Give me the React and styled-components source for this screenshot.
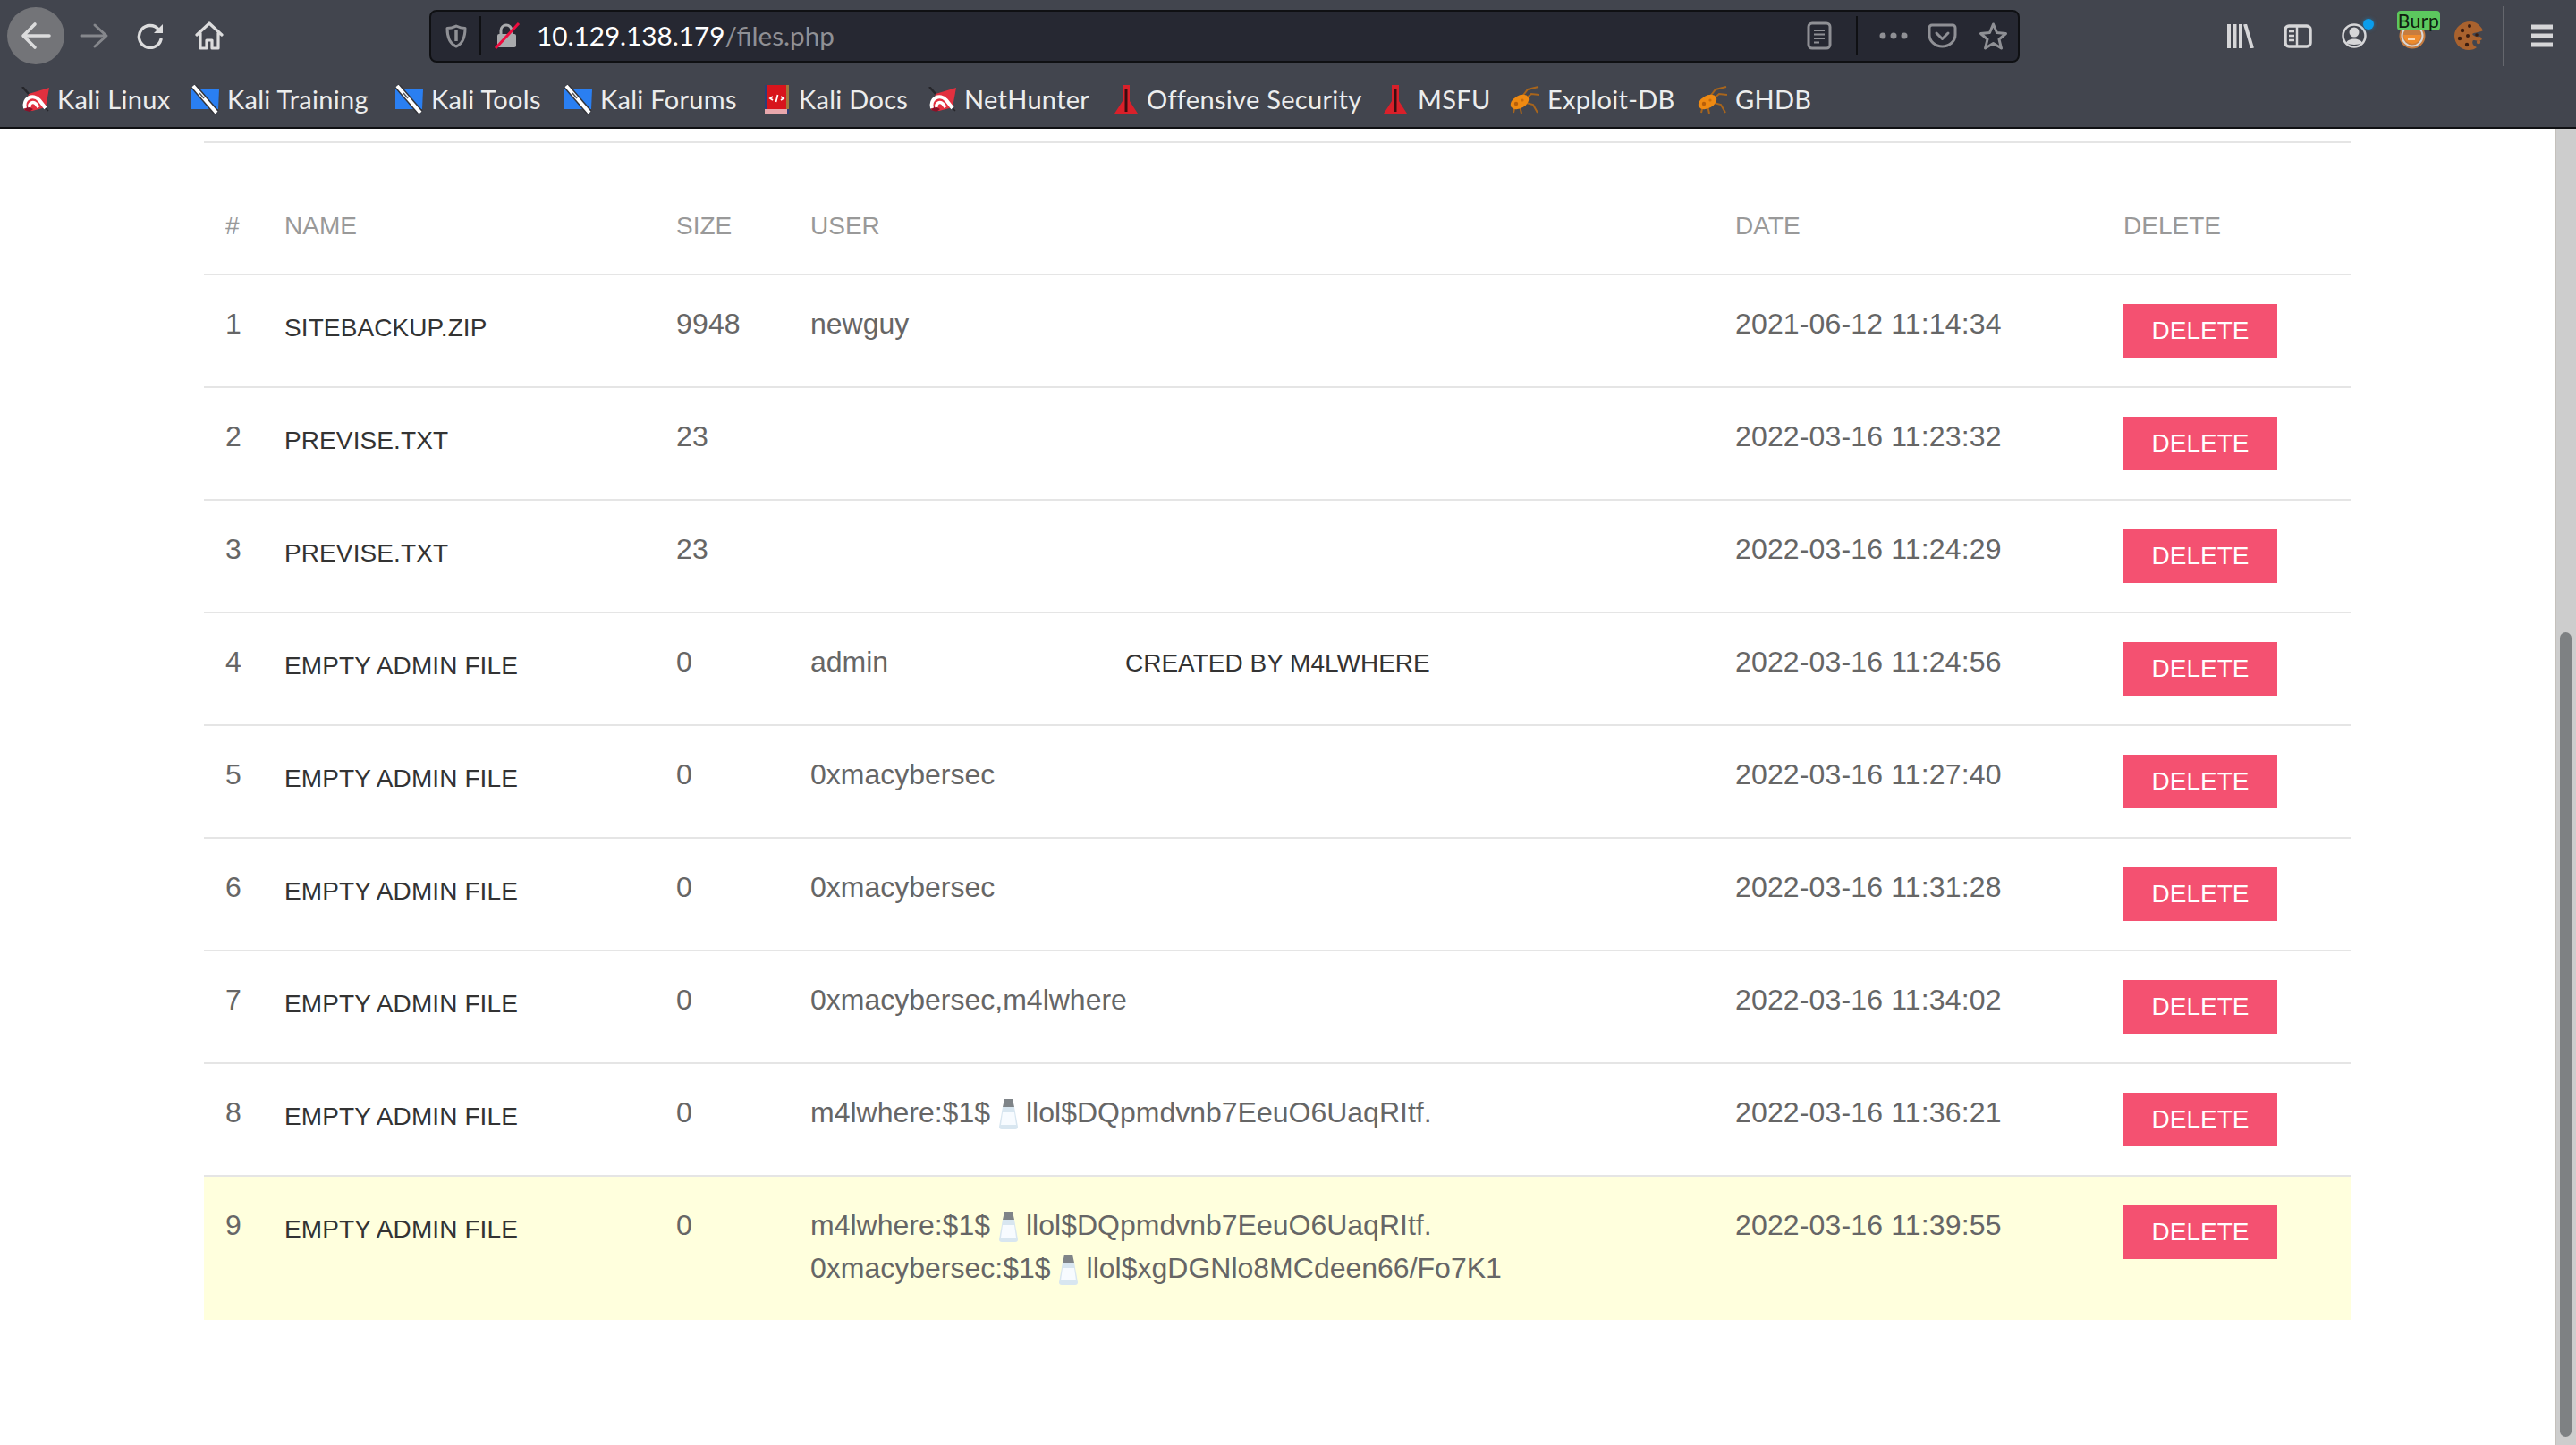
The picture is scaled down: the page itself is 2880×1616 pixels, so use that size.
import React from "react";
import styled, { createGlobalStyle } from "styled-components";

const Global = createGlobalStyle`
  html, body { margin: 0; padding: 0; background: #fff; }
  body { font-family: "Liberation Sans", Arial, sans-serif; overflow: hidden; }
  #root { height: 1616px; }
`;

const Page = styled.div`
  display: flex; flex-direction: column; width: 2880px; height: 1616px;
`;
const BrowserChrome = styled.header`
  background: #42454e; border-bottom: 2px solid #0f1013; flex: none;
`;
const Toolbar = styled.div`
  display: flex; align-items: center; height: 80px; padding-left: 8px;
`;
const NavGroup = styled.nav`
  display: flex; align-items: center; gap: 1px; width: 258px; flex: none;
`;
const NavButton = styled.button`
  display: flex; align-items: center; justify-content: center;
  width: 64px; height: 64px; padding: 0; border: 0; border-radius: 50%;
  background: ${p => (p.$active ? "#737478" : "transparent")};
  color: ${p => (p.$dim ? "#85878c" : "#dcdcdd")};
`;
const UrlBar = styled.div`
  display: flex; align-items: center; margin-left: 214px; width: 1778px; height: 59px;
  box-sizing: border-box; flex: none; padding: 0 11px 0 16px;
  background: #262832; border: 2px solid #0f1013; border-radius: 8px; color: #8f9095;
`;
const UrlDivider = styled.span`
  width: 2px; height: 44px; background: #0f1013; flex: none;
  margin: ${p => p.$margin};
`;
const UrlText = styled.span`
  font: 400 29.7px/1 Lato, sans-serif; color: #fff; flex: 1; margin-left: 18px;
  span { color: #8f9095; }
`;
const UrlIcon = styled.span`
  display: flex; flex: none; margin-left: ${p => p.$gap || 0}px;
`;
const RightTools = styled.div`
  display: flex; align-items: center; margin-left: 232px; color: #d6d6d8;
`;
const ToolIcon = styled.span`
  position: relative; display: flex; flex: none; margin-right: ${p => p.$gap ?? 33}px;
`;
const BurpBadge = styled.span`
  position: absolute; left: -2px; top: -13px; width: 48px; height: 22px;
  background: #5cc85e; color: #10200f; border-radius: 4px;
  font: 400 21px/21px Lato, sans-serif; text-align: center; letter-spacing: 0.5px;
`;
const NotifyDot = styled.span`
  position: absolute; right: -7px; top: -5px; width: 12px; height: 12px;
  border-radius: 50%; background: #0a9dec; box-shadow: 0 0 4px #0a9dec88;
`;
const ToolDivider = styled.span`
  width: 2px; height: 67px; background: #65676d; flex: none; margin-right: 30px;
`;
const BookmarkBar = styled.div`
  display: flex; align-items: center; height: 62px; padding: 0 0 1px 24px; box-sizing: border-box;
`;
const Bookmark = styled.a`
  display: flex; align-items: center; gap: ${p => p.$gap ?? 9}px; width: ${p => p.$w}px; flex: none;
  font: 400 29px/1 Lato, sans-serif; letter-spacing: 0.3px; color: #eceded; white-space: nowrap;
`;

const Viewport = styled.div`
  display: flex; flex: 1; min-height: 0;
`;
const Main = styled.main`
  flex: 1; padding: 14px 228px 0; min-width: 0;
`;
const Rule = styled.div`
  height: 2px; background: #e5e5e5;
`;
const FilesTable = styled.table`
  width: 2400px; table-layout: fixed; border-collapse: separate; border-spacing: 0;
  font-size: 32px; line-height: 48px; color: #666;
`;
const HeadCell = styled.th`
  padding: 72px 0 32px 24px; border-bottom: 2px solid #e5e5e5; vertical-align: bottom;
  font-size: 28px; font-weight: 400; line-height: 42px; color: #999; text-align: left;
`;
const Row = styled.tr`
  background: ${p => (p.$highlight ? "#ffffdd" : "transparent")};
`;
const Cell = styled.td`
  padding: 30px 0 34px 24px; vertical-align: top; letter-spacing: ${p => (p.$tight ? "0.15px" : "0")};
  border-bottom: ${p => (p.$last ? "0" : "2px solid #e5e5e5")};
`;
const NameCell = styled(Cell)`
  padding-top: 35px; padding-bottom: 0; font-size: 28px; letter-spacing: 0.1px; color: #333; text-transform: uppercase;
`;
const ActionCell = styled(Cell)`
  padding-top: 32px; padding-bottom: 32px;
`;
const UserName = styled.span`
  display: inline-block; width: ${p => (p.$fixed ? "352px" : "auto")};
`;
const Note = styled.span`
  font-size: 28px; color: #333; text-transform: uppercase; white-space: nowrap;
`;
const SaltSlot = styled.span`
  display: inline-flex; justify-content: center; width: 40px; height: 36px; vertical-align: -9px;
`;
const DeleteButton = styled.button`
  display: block; width: 172px; height: 60px; padding: 0; border: 0;
  background: #f45171; color: #fff;
  font: 400 28px/60px "Liberation Sans", Arial, sans-serif;
`;
const Scrollbar = styled.aside`
  flex: none; box-sizing: border-box; width: 24px; padding: 563px 5px 9px 4px;
  background: #cdcdcd; border-left: 2px solid #c4c0bb; display: flex;
`;
const ScrollThumb = styled.div`
  flex: 1; background: #7e8183; border-radius: 7px;
`;

const Svg = ({ w = 32, h = 32, vb, children, ...rest }) => (
  <svg width={w} height={h} viewBox={vb || `0 0 ${w} ${h}`} fill="none" {...rest}>{children}</svg>
);
const stroke = { stroke: "currentColor", strokeWidth: 3, strokeLinecap: "round", strokeLinejoin: "round" };

const BackIcon = () => (
  <Svg w={36} h={32}><path d="M17 3 4 16l13 13M5 16h28" {...stroke} strokeWidth={3.6} /></Svg>
);
const ForwardIcon = () => (
  <Svg w={34} h={30}><path d="M18 3l13 12-13 12M29 15H3" {...stroke} /></Svg>
);
const ReloadIcon = () => (
  <Svg w={32} h={30}><path d="M27 19a12.500 12.500 0 1 1-2.500-11" {...stroke} strokeWidth={3.4} /><path d="M29 2v10H19z" fill="currentColor" /></Svg>
);
const HomeIcon = () => (
  <Svg w={32} h={32}><path d="M2 15 16 2l14 13M6 13v17h7v-9h6v9h7V13" {...stroke} strokeWidth={3.2} /></Svg>
);
const ShieldIcon = () => (
  <Svg w={24} h={27}><path d="M12 2c4 2 6 2.500 10 2.500C22 15 19 22 12 25 5 22 2 15 2 4.500 6 4.500 8 4 12 2Z" {...stroke} /><path d="M12 7v12" stroke="currentColor" strokeWidth={3.500} /></Svg>
);
const LockIcon = () => (
  <Svg w={30} h={30}>
    <path d="M8 13V9a6 6 0 0 1 12 0v4" stroke="#a9aaad" strokeWidth={3} />
    <rect x={4} y={13} width={21} height={15} rx={2} fill="#a9aaad" />
    <path d="M2 29 28 1" stroke="#ee0c3f" strokeWidth={3} />
  </Svg>
);
const ReaderIcon = () => (
  <Svg w={28} h={32}><rect x={2} y={2} width={24} height={28} rx={4} stroke="currentColor" strokeWidth={3} /><path d="M8 10h12M8 14.500h12M8 19h12M8 23.500h6" stroke="currentColor" strokeWidth={2.200} /></Svg>
);
const DotsIcon = () => (
  <Svg w={32} h={8}><circle cx={4} cy={4} r={3.500} fill="currentColor" /><circle cx={16} cy={4} r={3.500} fill="currentColor" /><circle cx={28} cy={4} r={3.500} fill="currentColor" /></Svg>
);
const PocketIcon = () => (
  <Svg w={33} h={28}><path d="M5 2h23a3 3 0 0 1 3 3v8c0 7-6.500 13-14.500 13S2 20 2 13V5a3 3 0 0 1 3-3Z" {...stroke} /><path d="M10 11l6.500 6.500L23 11" {...stroke} /></Svg>
);
const StarIcon = () => (
  <Svg w={33} h={32}><path d="M16.500 3l4 9.500 10 1-7.500 6.500 2.500 10-9-5.500-9 5.500 2.500-10-7.500-6.500 10-1Z" {...stroke} /></Svg>
);
const LibraryIcon = () => (
  <Svg w={30} h={27}><path d="M2 0v27M8.500 0v27M15 0v27M20 0l8 27" stroke="currentColor" strokeWidth={4} /></Svg>
);
const SidebarIcon = () => (
  <Svg w={32} h={27}><rect x={2} y={2} width={28} height={23} rx={4} stroke="currentColor" strokeWidth={3.500} /><path d="M15 2v23" stroke="currentColor" strokeWidth={2.500} /><path d="M6 8h6M6 13h6M6 18h6" stroke="currentColor" strokeWidth={2.500} /></Svg>
);
const AccountIcon = () => (
  <Svg w={30} h={28}><circle cx={15} cy={14} r={12.500} stroke="currentColor" strokeWidth={2.500} /><circle cx={15} cy={10} r={5.500} fill="currentColor" /><path d="M6 22c2-6 16-6 18 0-4 2.500-14 2.500-18 0Z" fill="currentColor" /></Svg>
);
const BurpIcon = () => (
  <Svg w={30} h={30}>
    <circle cx={15} cy={15} r={14.500} fill="#c77c3f" />
    <circle cx={15} cy={15} r={11.500} stroke="#d8d8d8" strokeWidth={2} />
    <path d="M5 14h20a10 10 0 0 1-20 0Z" fill="#ee8b2d" />
    <path d="M10 19h8" stroke="#f8d9b8" strokeWidth={2} />
  </Svg>
);
const CookieIcon = () => (
  <Svg w={32} h={32}>
    <path d="M18 0C8 0 0 7 0 16c0 9 7 16 16 16 4 0 7-1 9-3-4-2-6-5-4-8 3 0 7 2 10-1l-2-3c-4 1-8-1-9-3 3-2 9-2 12-4-3-6-8-10-14-10Z" fill="#a9622e" />
    <circle cx={17} cy={5} r={2} fill="#3a1d10" /><circle cx={9} cy={10} r={2.200} fill="#3a1d10" />
    <circle cx={6} cy={19} r={2.200} fill="#3a1d10" /><circle cx={15} cy={16} r={2} fill="#3a1d10" />
    <circle cx={14} cy={26} r={2.200} fill="#3a1d10" /><circle cx={25} cy={15} r={1.800} fill="#3a1d10" /><circle cx={27} cy={23} r={2.200} fill="#a9622e" />
  </Svg>
);
const HamburgerIcon = () => (
  <Svg w={24} h={26}><path d="M0 3h24M0 13h24M0 23h24" stroke="currentColor" strokeWidth={5} /></Svg>
);

const KaliFav = () => (
  <Svg w={31} h={28}>
    <path d="M8 8 31 1 27 23 12 27 3 26Z" fill="#e2303f" />
    <path d="M3 26l6 2 4-3-6-3Z" fill="#8a1028" />
    <path d="M4 24C1 13 13 7 20 15l7 9" stroke="#fff" strokeWidth={4} />
    <path d="M9 23c-1-5 4-7 7-4l3 4" stroke="#fff" strokeWidth={3.500} />
    <path d="M1 0l7 8" stroke="#26262b" strokeWidth={2.500} />
    <path d="M27 24l3 3" stroke="#26262b" strokeWidth={1.500} />
  </Svg>
);
const ToolsFav = () => (
  <Svg w={31} h={32}>
    <path d="M0 5h31l-1 22H0Z" fill="#2a7ff2" />
    <path d="M2 1l26 30" stroke="#33343a" strokeWidth={7} />
    <path d="M2 1l26 30" stroke="#fff" strokeWidth={4} />
    <path d="M9 9l5 6" stroke="#55565c" strokeWidth={1.500} />
  </Svg>
);
const DocsFav = () => (
  <Svg w={27} h={32}>
    <rect x={0} y={0} width={27} height={32} fill="#2c3e77" />
    <rect x={3} y={0} width={21} height={27} fill="#d8141c" />
    <rect x={24} y={0} width={3} height={27} fill="#a2763a" />
    <rect x={0} y={27} width={25} height={5} fill="#e8a7ac" />
    <path d="M9 13l-3 2 3 2M18 13l3 2-3 2M14.500 11l-2 8" stroke="#fff" strokeWidth={1.800} />
  </Svg>
);
const TowerFav = () => (
  <Svg w={26} h={32}>
    <path d="M9 0h8v18l9 14H0l9-14Z" fill="#d9202a" />
    <path d="M13 4v26" stroke="#3a0d10" strokeWidth={3} />
  </Svg>
);
const SpiderFav = () => (
  <Svg w={33} h={32}>
    <path d="M13 14 20 5l12-3M17 16l7-6 9 1M18 20l8 2 5 9M11 23l2 9M6 23l-2 8" stroke="#a8651c" strokeWidth={2} />
    <ellipse cx={11} cy={19} rx={11} ry={7} fill="#ef8a12" transform="rotate(-30 11 19)" />
    <circle cx={7} cy={21} r={2.200} fill="#b85f0a" />
    <circle cx={14} cy={17} r={1.600} fill="#c96c0c" />
  </Svg>
);
const SaltIcon = () => (
  <Svg w={23} h={36}>
    <path d="M7 1h9l2 9H5Z" fill="#7f8488" />
    <path d="M5 10h13l4 22a3 3 0 0 1-3 3H4a3 3 0 0 1-3-3Z" fill="#d8e6f0" />
    <path d="M5 16h13l2 14H3Z" fill="#f7fbff" />
  </Svg>
);

const bookmarks = [
  ["Kali Linux", <KaliFav />, 190],
  ["Kali Training", <ToolsFav />, 228],
  ["Kali Tools", <ToolsFav />, 189],
  ["Kali Forums", <ToolsFav />, 224],
  ["Kali Docs", <DocsFav />, 183, 11],
  ["NetHunter", <KaliFav />, 208],
  ["Offensive Security", <TowerFav />, 301, 10],
  ["MSFU", <TowerFav />, 141, 12],
  ["Exploit-DB", <SpiderFav />, 210],
  ["GHDB", <SpiderFav />, 130],
];

const Salted = ({ user, hash }) => (
  <>{user}:$1$<SaltSlot><SaltIcon /></SaltSlot>llol${hash}</>
);

const M4L = <Salted user="m4lwhere" hash="DQpmdvnb7EeuO6UaqRItf." />;
const files = [
  ["sitebackup.zip", "9948", "newguy", "2021-06-12 11:14:34"],
  ["previse.txt", "23", "", "2022-03-16 11:23:32"],
  ["previse.txt", "23", "", "2022-03-16 11:24:29"],
  ["Empty admin file", "0", <><UserName $fixed>admin</UserName><Note>Created by m4lwhere</Note></>, "2022-03-16 11:24:56"],
  ["Empty admin file", "0", "0xmacybersec", "2022-03-16 11:27:40"],
  ["Empty admin file", "0", "0xmacybersec", "2022-03-16 11:31:28"],
  ["Empty admin file", "0", "0xmacybersec,m4lwhere", "2022-03-16 11:34:02"],
  ["Empty admin file", "0", M4L, "2022-03-16 11:36:21"],
  ["Empty admin file", "0", <>{M4L}<br /><Salted user="0xmacybersec" hash="xgDGNlo8MCdeen66/Fo7K1" /></>, "2022-03-16 11:39:55"],
];

export default function App() {
  return (
    <Page>
      <Global />
      <BrowserChrome>
        <Toolbar>
          <NavGroup>
            <NavButton $active><BackIcon /></NavButton>
            <NavButton $dim><ForwardIcon /></NavButton>
            <NavButton><ReloadIcon /></NavButton>
            <NavButton><HomeIcon /></NavButton>
          </NavGroup>
          <UrlBar>
            <ShieldIcon />
            <UrlDivider $margin="0 14px 0 14px" />
            <LockIcon />
            <UrlText>10.129.138.179<span>/files.php</span></UrlText>
            <ReaderIcon />
            <UrlDivider $margin="0 24px 0 27px" />
            <DotsIcon />
            <UrlIcon $gap={22}><PocketIcon /></UrlIcon>
            <UrlIcon $gap={24}><StarIcon /></UrlIcon>
          </UrlBar>
          <RightTools>
            <ToolIcon><LibraryIcon /></ToolIcon>
            <ToolIcon $gap={32}><SidebarIcon /></ToolIcon>
            <ToolIcon $gap={35}><AccountIcon /><NotifyDot /></ToolIcon>
            <ToolIcon $gap={32}><BurpIcon /><BurpBadge>Burp</BurpBadge></ToolIcon>
            <ToolIcon $gap={22}><CookieIcon /></ToolIcon>
            <ToolDivider />
            <HamburgerIcon />
          </RightTools>
        </Toolbar>
        <BookmarkBar>
          {bookmarks.map(([label, icon, w, gap]) => (
            <Bookmark key={label} $w={w} $gap={gap}>{icon}{label}</Bookmark>
          ))}
        </BookmarkBar>
      </BrowserChrome>
      <Viewport>
        <Main>
          <Rule />
          <FilesTable>
            <colgroup>
              <col width="66" /><col width="438" /><col width="150" />
              <col width="1034" /><col width="434" /><col width="278" />
            </colgroup>
            <thead>
              <tr>
                {["#", "NAME", "SIZE", "USER", "DATE", "DELETE"].map(h => <HeadCell key={h}>{h}</HeadCell>)}
              </tr>
            </thead>
            <tbody>
              {files.map(([name, size, user, date], i) => {
                const last = i === files.length - 1;
                return (
                  <Row key={i} $highlight={last}>
                    <Cell $last={last}>{i + 1}</Cell>
                    <NameCell $last={last}>{name}</NameCell>
                    <Cell $last={last} $tight>{size}</Cell>
                    <Cell $last={last}>{user}</Cell>
                    <Cell $last={last} $tight>{date}</Cell>
                    <ActionCell $last={last}><DeleteButton>DELETE</DeleteButton></ActionCell>
                  </Row>
                );
              })}
            </tbody>
          </FilesTable>
        </Main>
        <Scrollbar><ScrollThumb /></Scrollbar>
      </Viewport>
    </Page>
  );
}
